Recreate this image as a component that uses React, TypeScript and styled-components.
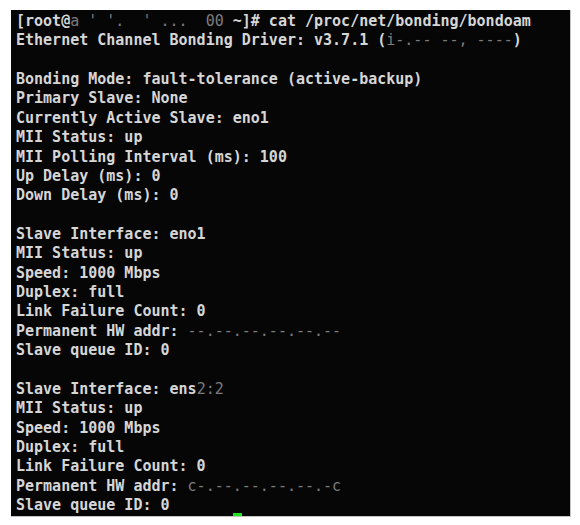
import React from "react";
import styled, { createGlobalStyle } from "styled-components";

const Global = createGlobalStyle`
  html, body { margin: 0; padding: 0; background: #ffffff; }
  body { width: 580px; height: 525px; overflow: hidden; }
`;

const Page = styled.div`
  padding: 10px 0 0 11px;
`;

const Terminal = styled.div`
  box-sizing: border-box;
  width: 560px;
  height: 507px;
  background: #060606;
  border-right: 1px solid #c4c4c4;
  border-bottom: 1px solid #c4c4c4;
  overflow: hidden;
  padding: 2px 0 0 5px;
  font-family: "DejaVu Sans Mono", "Liberation Mono", monospace;
  font-weight: bold;
  font-size: 15px;
  line-height: 19.36px;
  color: #d6d6d6;
  white-space: pre;
`;

const Line = styled.div`
  height: 19.36px;
`;

const Masked = styled.span`
  color: #7c7c7c;
  font-weight: normal;
`;

const Cursor = styled.span`
  display: inline-block;
  width: 9px;
  height: 14px;
  margin-top: -2px;
  vertical-align: top;
  background: #1ee61e;
`;

type Seg = string | { m: string };
const lines: Seg[][] = [
  ["[root@", { m: "a ' '.  ' ...  00" }, " ~]# cat /proc/net/bonding/bondoam"],
  ["Ethernet Channel Bonding Driver: v3.7.1 (", { m: "i-.-- --, ----" }, ")"],
  [],
  ["Bonding Mode: fault-tolerance (active-backup)"],
  ["Primary Slave: None"],
  ["Currently Active Slave: eno1"],
  ["MII Status: up"],
  ["MII Polling Interval (ms): 100"],
  ["Up Delay (ms): 0"],
  ["Down Delay (ms): 0"],
  [],
  ["Slave Interface: eno1"],
  ["MII Status: up"],
  ["Speed: 1000 Mbps"],
  ["Duplex: full"],
  ["Link Failure Count: 0"],
  ["Permanent HW addr: ", { m: "--.--.--.--.--.--" }],
  ["Slave queue ID: 0"],
  [],
  ["Slave Interface: ens", { m: "2:2" }],
  ["MII Status: up"],
  ["Speed: 1000 Mbps"],
  ["Duplex: full"],
  ["Link Failure Count: 0"],
  ["Permanent HW addr: ", { m: "c-.--.--.--.--.-c" }],
  ["Slave queue ID: 0"],
];

export default function App() {
  return (
    <>
      <Global />
      <Page>
        <Terminal>
          {lines.map((segs, i) => (
            <Line key={i}>
              {segs.length === 0
                ? " "
                : segs.map((s, j) =>
                    typeof s === "string" ? (
                      <React.Fragment key={j}>{s}</React.Fragment>
                    ) : (
                      <Masked key={j}>{s.m}</Masked>
                    )
                  )}
            </Line>
          ))}
          <Line>
            {"                        "}
            <Cursor />
          </Line>
        </Terminal>
      </Page>
    </>
  );
}
